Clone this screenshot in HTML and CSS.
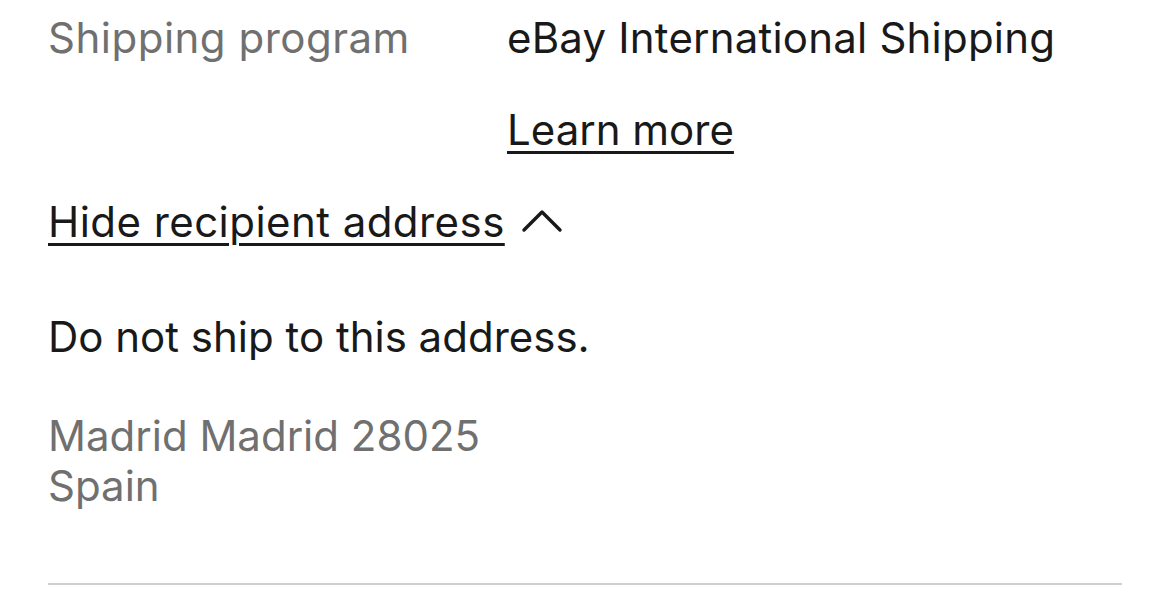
FILE: index.html
```html
<!DOCTYPE html>
<html>
<head>
<meta charset="utf-8">
<link rel="stylesheet" href="styles.css">
</head>
<body>
<div class="panel">
  <div class="row">
    <div class="label">Shipping program</div>
    <div class="value">
      <div class="value-text">eBay International Shipping</div>
      <a class="link learn" href="#">Learn more</a>
    </div>
  </div>
  <div class="toggle">
    <a class="link hide" href="#">Hide recipient address</a>
    <svg class="chev" width="42" height="28" viewBox="0 0 42 28"><path d="M3 24 L21 6 L39 24" fill="none" stroke="#191919" stroke-width="3.4" stroke-linecap="round" stroke-linejoin="round"/></svg>
  </div>
  <p class="warn">Do not ship to this address.</p>
  <div class="addr">
    <div>Madrid Madrid 28025</div>
    <div>Spain</div>
  </div>
  <hr class="divider">
</div>
</body>
</html>
```
FILE: styles.css
```css
html, body { margin: 0; padding: 0; background: #fff; }
body { font-family: Inter, "Open Sans", sans-serif; font-size: 42px; line-height: 50px; color: #191919; }
.panel { padding: 13px 48px 0 48px; }
.row { display: grid; grid-template-columns: 459px 1fr; }
.label { color: #707070; letter-spacing: 0.5px; }
.value { display: flex; flex-direction: column; gap: 42px; align-items: flex-start; }
.value-text { letter-spacing: 0.2px; }
.link { color: #191919; text-decoration: underline; text-decoration-thickness: 3px; text-underline-offset: 6px; }
.hide { letter-spacing: 0.45px; }
.toggle { display: flex; align-items: center; gap: 16px; margin-top: 42px; }
.chev { display: block; margin-top: -4px; }
.warn { margin: 65px 0 0 0; }
.addr { color: #707070; margin-top: 49px; }
.divider { border: 0; border-top: 2px solid #cfcfcf; margin: 72px 0 0 0; }
```
